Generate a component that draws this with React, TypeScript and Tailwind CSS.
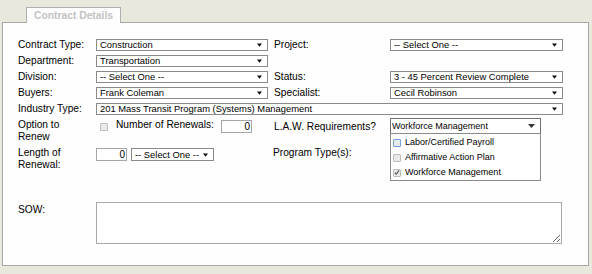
import React from 'react';

const font = "font-['Liberation_Sans',Arial,sans-serif]";

function Arrow() {
  return (
    <svg width="5" height="4" viewBox="0 0 5 4" className="shrink-0">
      <path d="M0 0.5h5L2.5 3.8z" fill="#111" />
    </svg>
  );
}

function Select({ text, className }: { text: string; className: string }) {
  return (
    <div
      className={`flex h-[12px] items-center justify-between border border-[#8a8a8a] bg-white pl-[3px] pr-[5px] text-[9.4px] leading-none text-black ${className}`}
    >
      <span className="whitespace-nowrap">{text}</span>
      <Arrow />
    </div>
  );
}

function Box({ checked, focused }: { checked?: boolean; focused?: boolean }) {
  return (
    <div
      className={`relative flex h-[8px] w-[8px] shrink-0 items-center justify-center rounded-[1px] border bg-[#e9e9e9] ${
        focused ? 'border-[#6fa0e0]' : 'border-[#bdbdbd]'
      }`}
    >
      {checked && (
        <svg width="7" height="7" viewBox="0 0 7 7">
          <path d="M1 3.6l1.6 1.7L6 1" stroke="#555" strokeWidth="1.3" fill="none" />
        </svg>
      )}
    </div>
  );
}

function Label({ children, className = '' }: { children: React.ReactNode; className?: string }) {
  return <div className={`shrink-0 text-[10.2px] leading-[12px] text-black ${className}`}>{children}</div>;
}

export default function App() {
  return (
    <div className={`h-[274px] w-[592px] overflow-hidden bg-[#e8e8dc] px-[2px] pt-[7px] ${font}`}>
      {/* tab */}
      <div className="relative z-10 -mb-px ml-[24px] flex h-[16px] w-[95px] items-center justify-center border border-b-0 border-[#b0b0b0] bg-[#fdfdfd] text-[10.3px] font-bold text-[#c3c3c3]">
        Contract Details
      </div>

      {/* panel */}
      <div className="h-[244px] w-[587px] border border-[#a8a8a8] bg-[#fefefe] pl-[15px] pt-[16px]">
        <div className="mb-[4px] flex h-[12px] items-center">
          <Label className="w-[78px]">Contract Type:</Label>
          <Select text="Construction" className="w-[172px]" />
          <div className="w-[6px]" />
          <Label className="w-[116px]">Project:</Label>
          <Select text="-- Select One --" className="w-[173px]" />
        </div>
        <div className="mb-[4px] flex h-[12px] items-center">
          <Label className="w-[78px]">Department:</Label>
          <Select text="Transportation" className="w-[172px]" />
        </div>
        <div className="mb-[4px] flex h-[12px] items-center">
          <Label className="w-[78px]">Division:</Label>
          <Select text="-- Select One --" className="w-[172px]" />
          <div className="w-[6px]" />
          <Label className="w-[116px]">Status:</Label>
          <Select text="3 - 45 Percent Review Complete" className="w-[173px]" />
        </div>
        <div className="mb-[4px] flex h-[12px] items-center">
          <Label className="w-[78px]">Buyers:</Label>
          <Select text="Frank Coleman" className="w-[172px]" />
          <div className="w-[6px]" />
          <Label className="w-[116px]">Specialist:</Label>
          <Select text="Cecil Robinson" className="w-[173px]" />
        </div>
        <div className="mb-[4px] flex h-[12px] items-center">
          <Label className="w-[78px]">Industry Type:</Label>
          <Select text="201 Mass Transit Program (Systems) Management" className="w-[467px]" />
        </div>

        {/* option to renew */}
        <div className="mb-[4px] flex h-[24px] items-start">
          <Label className="w-[78px]">
            Option to
            <br />
            Renew
          </Label>
          <div className="flex w-[178px] items-start">
            <div className="ml-[4px] mt-[4px]">
              <Box />
            </div>
            <Label className="ml-[8px]">Number of Renewals:</Label>
            <div className="ml-auto mr-[22px] mt-[1px] flex h-[13px] w-[31px] items-center justify-end border border-[#a6a6a6] bg-white pr-[1px] text-[10px] leading-none">
              0
            </div>
          </div>
          <Label className="mt-[2px] w-[116px]">L.A.W. Requirements?</Label>
          <div className="relative -mt-px w-[151px]">
            <div className="flex h-[16px] items-center justify-between border border-[#707070] bg-white pl-px pr-[5px] text-[9px] leading-none">
              <span className="whitespace-nowrap">Workforce Management</span>
              <svg width="7" height="4" viewBox="0 0 7 4">
                <path d="M0 0h7L3.5 4z" fill="#333" />
              </svg>
            </div>
            <div className="absolute left-0 top-[15px] z-20 w-[151px] border border-[#8a8a8a] bg-white pt-px text-[9px] leading-none">
              <div className="flex h-[15px] items-center pl-[2px]">
                <Box focused />
                <span className="ml-[4px]">Labor/Certified Payroll</span>
              </div>
              <div className="flex h-[15px] items-center pl-[2px]">
                <Box />
                <span className="ml-[4px]">Affirmative Action Plan</span>
              </div>
              <div className="flex h-[15px] items-center pl-[2px]">
                <Box checked />
                <span className="ml-[4px]">Workforce Management</span>
              </div>
            </div>
          </div>
        </div>

        {/* length of renewal */}
        <div className="flex h-[24px] items-start">
          <Label className="w-[78px]">
            Length of
            <br />
            Renewal:
          </Label>
          <div className="mt-[1px] flex h-[13px] w-[31px] items-center justify-end border border-[#a6a6a6] bg-white pr-[1px] text-[10px] leading-none">
            0
          </div>
          <div className="w-[4px]" />
          <Select text="-- Select One --" className="mt-[1px] h-[13px] w-[83px] pr-[4px]" />
          <div className="w-[59px]" />
          <Label>Program Type(s):</Label>
        </div>

        {/* SOW */}
        <div className="mt-[31px] flex items-start">
          <Label className="mt-[2px] w-[78px]">SOW:</Label>
          <textarea
            className="block h-[42px] w-[466px] resize border border-[#a9a9a9] bg-white outline-none"
            defaultValue=""
          />
        </div>
      </div>
    </div>
  );
}
